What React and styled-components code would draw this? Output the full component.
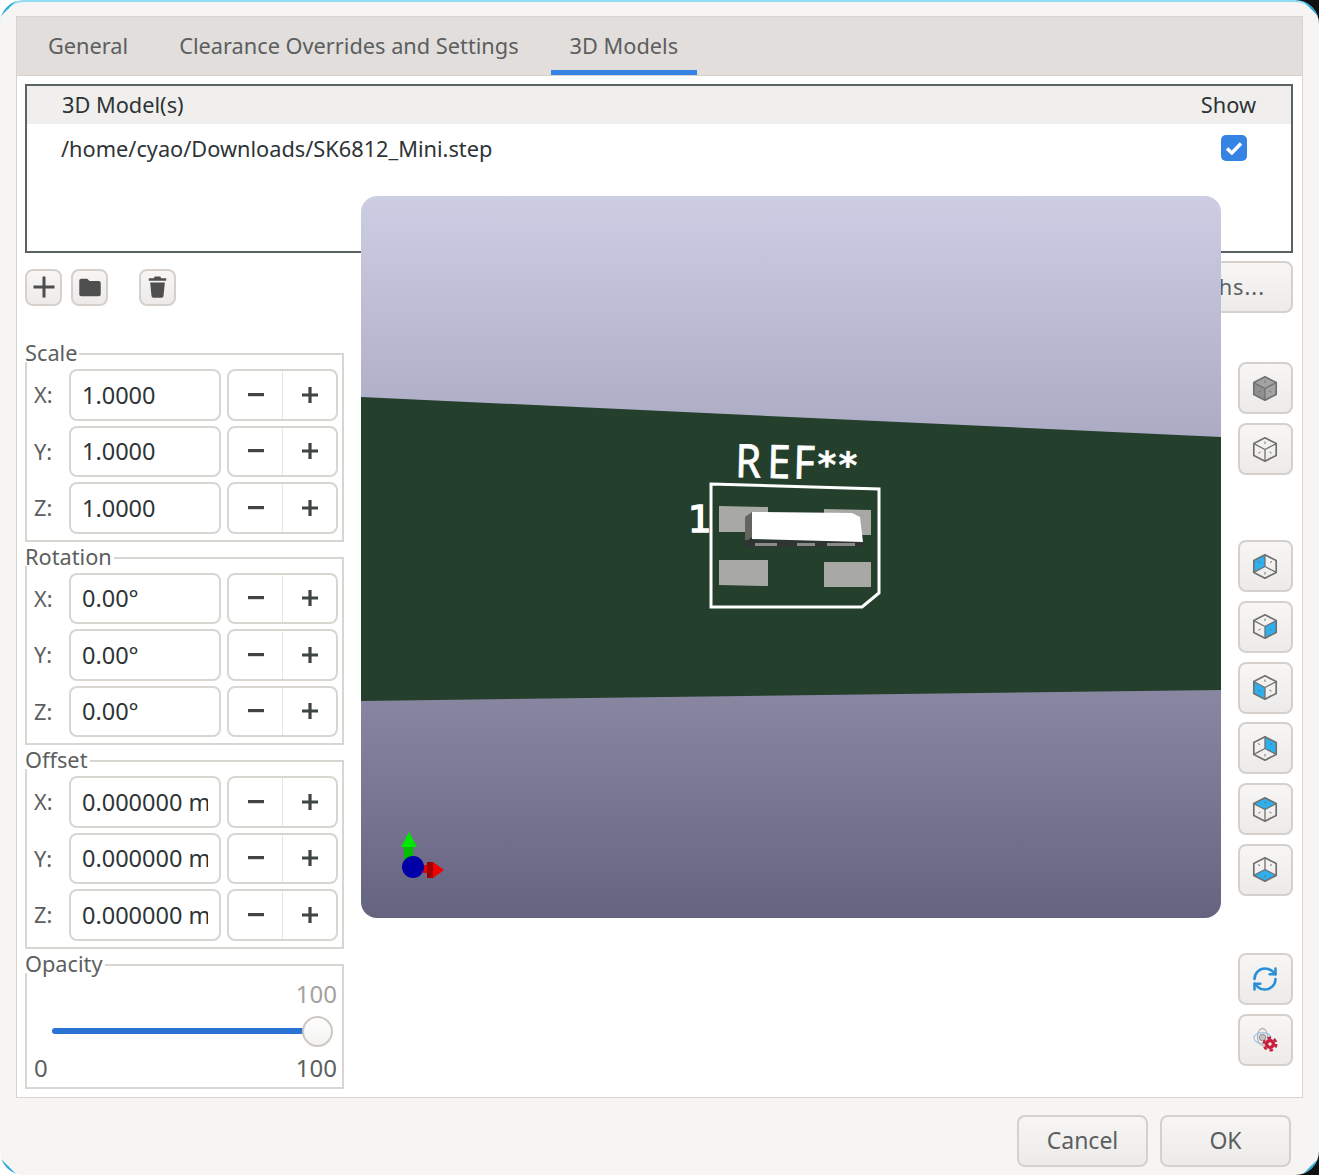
import React from 'react';
import styled, { createGlobalStyle } from 'styled-components';
import { RefreshCw } from 'lucide-react';

const GlobalStyle = createGlobalStyle`
  html, body {
    margin: 0;
    padding: 0;
    background: linear-gradient(90deg, #fff 50%, #111 50%);
  }
  * {
    box-sizing: border-box;
  }
`;

const HEX = { t: '12,0.8', ur: '23.2,6.6', lr: '23.2,18.4', b: '12,24.2', ll: '0.8,18.4', ul: '0.8,6.6', c: '12,12.5' };

const FACES = {
  top: ['t', 'ur', 'c', 'ul'],
  right: ['c', 'ur', 'lr', 'b'],
  left: ['ul', 'c', 'b', 'll'],
  back: ['t', 'c', 'll', 'ul'],
  rear: ['t', 'ur', 'lr', 'c'],
  bottom: ['c', 'lr', 'b', 'll'],
};

const pts = (keys) => keys.map((k) => HEX[k]).join(' ');

const CubeIcon = ({ face, solid, inverted }) => (
  <svg width="26" height="27" viewBox="-1 -1 26 27">
    {solid && <polygon points={pts(['ul', 't', 'ur', 'lr', 'b', 'll'])} fill="#a3a3a3" />}
    {solid && <polygon points={pts(FACES.left)} fill="#8f8f8f" />}
    {face && <polygon points={pts(FACES[face])} fill="#2fb0ee" />}
    <polygon points={pts(['ul', 't', 'ur', 'lr', 'b', 'll'])} fill="none" stroke="#707070" strokeWidth="1.7" strokeLinejoin="round" />
    {inverted ? (
      <path d="M12 12.5V0.8M12 12.5L0.8 18.4M12 12.5L23.2 18.4" stroke="#707070" strokeWidth="1.3" fill="none" />
    ) : (
      <path d="M12 12.5V24.2M12 12.5L0.8 6.6M12 12.5L23.2 6.6" stroke="#707070" strokeWidth="1.3" fill="none" />
    )}
    <path
      d={inverted ? 'M5 7.5L7 8.6M17 8.6L19 7.5M12 18V20.5' : 'M12 4.5V7M5.5 16.2L7.5 15M16.5 15L18.5 16.2'}
      stroke="#707070"
      strokeWidth="1"
      fill="none"
    />
  </svg>
);

const PlusIcon = () => (
  <svg width="24" height="24" viewBox="0 0 24 24">
    <path d="M12 1.5V22.5M1.5 12H22.5" stroke="#4d4d4d" strokeWidth="3" fill="none" />
  </svg>
);

const FolderIcon = () => (
  <svg width="22" height="19" viewBox="0 0 24 20">
    <path d="M2.5 0.5H9L11.5 3H21.5C22.8 3 23.7 4 23.7 5.2V17.3C23.7 18.6 22.8 19.5 21.5 19.5H2.5C1.2 19.5 0.3 18.6 0.3 17.3V2.7C0.3 1.4 1.2 0.5 2.5 0.5Z" fill="#4f4f4f" />
  </svg>
);

const TrashIcon = () => (
  <svg width="19" height="22" viewBox="0 0 20 24">
    <path d="M7 0.5H13L14 2.5H19.5V5.2H0.5V2.5H6Z M2 7H18L16.6 21.5C16.5 22.8 15.6 23.6 14.4 23.6H5.6C4.4 23.6 3.5 22.8 3.4 21.5Z" fill="#4f4f4f" />
  </svg>
);

const SettingsIcon = () => (
  <svg width="30" height="30" viewBox="0 0 30 30">
    <ellipse cx="12.5" cy="13" rx="8.5" ry="5.5" fill="none" stroke="#a9c9e6" strokeWidth="1.3" />
    <ellipse cx="12.5" cy="12" rx="5" ry="8.5" fill="none" stroke="#b5b5b5" strokeWidth="1.3" />
    <circle cx="12.5" cy="12.5" r="3.2" fill="#c4c4c4" stroke="#8d8d8d" strokeWidth="1" />
    <circle cx="20" cy="19" r="3.4" fill="none" stroke="#c8203f" strokeWidth="3.4" />
    <circle cx="20" cy="19" r="6.2" fill="none" stroke="#c8203f" strokeWidth="2.6" strokeDasharray="3.5 2.99" />
  </svg>
);

const Window = styled.div`
  width: 1319px;
  height: 1175px;
  background: #f6f5f4;
  border-top: 2px solid #8fdcf3;
  border-radius: 24px;
  padding: 14px 16px 9px;
  display: flex;
  flex-direction: column;
  font-family: "Noto Sans", sans-serif;
  font-size: 21.75px;
  color: #2e3436;
  position: relative;
`;

const CORNER_CLIP = {
  'top-left': 'polygon(0 0, 17px 0, 0 17px)',
  'top-right': 'polygon(100% 0, 7px 0, 100% 17px)',
  'bottom-left': 'polygon(0 100%, 0 7px, 17px 100%)',
  'bottom-right': 'polygon(100% 100%, 100% 7px, 7px 100%)',
};

const Corner = styled.div`
  position: absolute;
  width: 24px;
  height: 24px;
  ${({ $v }) => ($v === 'top' ? 'top: -2px;' : 'bottom: 0;')}
  ${({ $h }) => ($h === 'left' ? 'left: 0;' : 'right: 0;')}
  border-${({ $v }) => $v}: 3px solid #25a9d8;
  border-${({ $h }) => $h}: 3px solid #25a9d8;
  border-${({ $v }) => $v}-${({ $h }) => $h}-radius: 24px;
  clip-path: ${({ $v, $h }) => CORNER_CLIP[`${$v}-${$h}`]};
`;

const Notebook = styled.div`
  flex: 1;
  min-height: 0;
  border: 1px solid #d8d4d0;
  background: #fff;
  display: flex;
  flex-direction: column;
`;

const TabBar = styled.div`
  height: 59px;
  flex: none;
  background: #e1dedb;
  border-bottom: 1px solid #d5d1cc;
  padding-left: 12px;
  display: flex;
  gap: 13px;
`;

const Tab = styled.div`
  height: 58px;
  padding: 3px 19px 0;
  display: flex;
  align-items: center;
  color: #5c5f60;
  border-bottom: 5px solid ${({ $active }) => ($active ? '#3584e4' : 'transparent')};
  white-space: nowrap;
`;

const Page = styled.div`
  flex: 1;
  min-height: 0;
  padding: 8px 9px 0 8px;
  display: flex;
  flex-direction: column;
`;

const ModelList = styled.div`
  height: 169px;
  flex: none;
  border: 2px solid #5b6362;
`;

const ListHead = styled.div`
  height: 38px;
  background: #f0efed;
  display: flex;
  align-items: center;
  justify-content: space-between;
  padding: 0 35px 2px 35px;
`;

const ListRow = styled.div`
  height: 50px;
  display: flex;
  align-items: center;
  justify-content: space-between;
  padding: 0 44px 2px 34px;
`;

const Checkbox = styled.div`
  width: 26px;
  height: 26px;
  border-radius: 5px;
  background: #3584e4;
  display: flex;
  align-items: center;
  justify-content: center;
`;

const Toolbar = styled.div`
  margin-top: 8px;
  height: 52px;
  flex: none;
  display: flex;
  align-items: center;
`;

const SmallButton = styled.div`
  width: 37px;
  height: 37px;
  border: 2px solid #d5d0cb;
  border-radius: 8px;
  background: linear-gradient(#f7f6f5, #edebe9);
  display: flex;
  align-items: center;
  justify-content: center;
  margin-right: ${({ $gap }) => $gap}px;
`;

const PathsButton = styled.div`
  margin-left: auto;
  width: 300px;
  height: 52px;
  border: 2px solid #d5d0cb;
  border-radius: 8px;
  background: linear-gradient(#f7f6f5, #edebe9);
  display: flex;
  align-items: center;
  justify-content: flex-end;
  padding: 0 26px 2px 0;
  color: #5c5f60;
  letter-spacing: 1px;
`;

const Body = styled.div`
  flex: 1;
  min-height: 0;
  display: flex;
  justify-content: space-between;
`;

const LeftColumn = styled.div`
  width: 319px;
  padding-top: 33px;
  display: flex;
  flex-direction: column;
  gap: 8px;
`;

const Group = styled.fieldset`
  margin: 0;
  padding: 7px 4px 6px 0;
  border: 2px solid #d9d5d1;
  min-width: 0;
`;

const Legend = styled.legend`
  margin-left: -2px;
  padding: 0 2px 0 0;
  line-height: 13px;
  height: 16px;
  color: #5c5f60;
  background: #fff;
`;

const Rows = styled.div`
  display: flex;
  flex-direction: column;
  gap: 5px;
`;

const Row = styled.div`
  display: flex;
  align-items: center;
  height: 51.5px;
  padding-left: 7px;
`;

const AxisLabel = styled.div`
  width: 35px;
  color: #5c5f60;
`;

const Field = styled.div`
  width: 152px;
  height: 100%;
  border: 2px solid #d9d5d1;
  border-radius: 8px;
  padding: 0 0 0 11px;
  display: flex;
  align-items: center;
  white-space: nowrap;
  margin-right: 6px;
  font-size: 23.5px;
`;

const FieldClip = styled.div`
  width: 126px;
  overflow: hidden;
`;

const Spinner = styled.div`
  width: 111px;
  height: 100%;
  border: 2px solid #d9d5d1;
  border-radius: 8px;
  display: flex;
`;

const SpinPart = styled.div`
  flex: 1;
  display: flex;
  align-items: center;
  justify-content: center;
  & + & {
    border-left: 1px solid #e8e6e3;
  }
`;

const SliderBox = styled.div`
  padding: 0 1px 0 7px;
  display: flex;
  flex-direction: column;
  font-size: 24px;
`;

const SliderValue = styled.div`
  flex: none;
  text-align: right;
  color: #a2a2a0;
  height: 28px;
  line-height: 28px;
`;

const Track = styled.div`
  flex: none;
  height: 6px;
  margin: 20px 19px 0 18px;
  border-radius: 3px;
  background: #2a73d4;
  position: relative;
`;

const Thumb = styled.div`
  position: absolute;
  right: -15px;
  top: -12px;
  width: 31px;
  height: 31px;
  border-radius: 50%;
  background: linear-gradient(#fff, #f3f2f0);
  border: 2px solid #cdc7c2;
`;

const Scale = styled.div`
  flex: none;
  margin-top: 21px;
  height: 26px;
  line-height: 26px;
  display: flex;
  justify-content: space-between;
  color: #5c5f60;
`;

const RightColumn = styled.div`
  padding-top: 49px;
  display: flex;
  flex-direction: column;
`;

const IconButton = styled.div`
  width: 55px;
  height: 52px;
  flex: none;
  border: 2px solid #d5d0cb;
  border-radius: 8px;
  background: linear-gradient(#f7f6f5, #edebe9);
  display: flex;
  align-items: center;
  justify-content: center;
  padding-right: 1px;
  margin-top: ${({ $gap }) => $gap}px;
`;

const Footer = styled.div`
  flex: none;
  height: 68px;
  padding: 17px 12px 0 0;
  display: flex;
  justify-content: flex-end;
  gap: 12px;
`;

const DialogButton = styled.div`
  width: 131px;
  height: 52px;
  flex: none;
  border: 2px solid #d5d0cb;
  border-radius: 8px;
  background: linear-gradient(#f7f6f5, #edebe9);
  display: flex;
  align-items: center;
  justify-content: center;
  padding-bottom: 2px;
  color: #5c5f60;
  font-size: 23px;
`;

const Preview = styled.div`
  position: absolute;
  left: 361px;
  top: 194px;
  width: 860px;
  height: 722px;
  border-radius: 16px;
  overflow: hidden;
  background: linear-gradient(#cdcde4 0%, #8885a1 70%, #656480 100%);
`;

const PreviewSvg = styled.svg`
  display: block;
`;

const Silk = styled.text`
  font-family: "Noto Sans", sans-serif;
  fill: #fff;
  stroke: #fff;
  stroke-width: 0.8;
`;

const SilkStars = styled.text`
  font-family: "DejaVu Sans", sans-serif;
  font-weight: bold;
  fill: #fff;
  stroke: #fff;
  stroke-width: 0.4;
`;

const SilkPin = styled.text`
  font-family: "DejaVu Sans", sans-serif;
  fill: #fff;
  stroke: #fff;
  stroke-width: 1.5;
`;

const AxisGroup = ({ label, rows }) => (
  <Group>
    <Legend>{label}</Legend>
    <Rows>
      {rows.map((r) => (
        <Row key={r.axis}>
          <AxisLabel>{r.axis}:</AxisLabel>
          <Field>
            <FieldClip>{r.value}</FieldClip>
          </Field>
          <Spinner>
            <SpinPart>
              <svg width="16" height="4" viewBox="0 0 16 4"><rect width="16" height="3.2" fill="#3f4445" /></svg>
            </SpinPart>
            <SpinPart>
              <svg width="16" height="16" viewBox="0 0 16 16"><path d="M8 0V16M0 8H16" stroke="#3f4445" strokeWidth="3.2" fill="none" /></svg>
            </SpinPart>
          </Spinner>
        </Row>
      ))}
    </Rows>
  </Group>
);

const xyz = (value) => ['X', 'Y', 'Z'].map((axis) => ({ axis, value }));

export default function App() {
  return (
    <Window>
      <GlobalStyle />
      <Corner $v="top" $h="left" />
      <Corner $v="top" $h="right" />
      <Corner $v="bottom" $h="left" />
      <Corner $v="bottom" $h="right" />
      <Notebook>
        <TabBar>
          <Tab>General</Tab>
          <Tab>Clearance Overrides and Settings</Tab>
          <Tab $active>3D Models</Tab>
        </TabBar>
        <Page>
          <ModelList>
            <ListHead>
              <span>3D Model(s)</span>
              <span>Show</span>
            </ListHead>
            <ListRow>
              <span>/home/cyao/Downloads/SK6812_Mini.step</span>
              <Checkbox>
                <svg width="18" height="14" viewBox="0 0 18 14">
                  <path d="M2 7.5L6.8 12L16 2.5" stroke="#fff" strokeWidth="3.4" fill="none" />
                </svg>
              </Checkbox>
            </ListRow>
          </ModelList>
          <Toolbar>
            <SmallButton $gap={9}><PlusIcon /></SmallButton>
            <SmallButton $gap={31}><FolderIcon /></SmallButton>
            <SmallButton><TrashIcon /></SmallButton>
            <PathsButton>Configure Paths...</PathsButton>
          </Toolbar>
          <Body>
            <LeftColumn>
              <AxisGroup label="Scale" rows={xyz('1.0000')} />
              <AxisGroup label="Rotation" rows={xyz('0.00°')} />
              <AxisGroup label="Offset" rows={xyz('0.000000 mm')} />
              <Group>
                <Legend>Opacity</Legend>
                <SliderBox>
                  <SliderValue>100</SliderValue>
                  <Track><Thumb /></Track>
                  <Scale><span>0</span><span>100</span></Scale>
                </SliderBox>
              </Group>
            </LeftColumn>
            <RightColumn>
              <IconButton><CubeIcon solid /></IconButton>
              <IconButton $gap={9}><CubeIcon /></IconButton>
              <IconButton $gap={65}><CubeIcon face="back" inverted /></IconButton>
              <IconButton $gap={8.8}><CubeIcon face="right" /></IconButton>
              <IconButton $gap={8.8}><CubeIcon face="left" /></IconButton>
              <IconButton $gap={8.8}><CubeIcon face="rear" inverted /></IconButton>
              <IconButton $gap={8.8}><CubeIcon face="top" /></IconButton>
              <IconButton $gap={8.8}><CubeIcon face="bottom" inverted /></IconButton>
              <IconButton $gap={57}><RefreshCw size={28} color="#2b8fd8" strokeWidth={2.2} /></IconButton>
              <IconButton $gap={9}><SettingsIcon /></IconButton>
            </RightColumn>
          </Body>
        </Page>
      </Notebook>
      <Footer>
        <DialogButton>Cancel</DialogButton>
        <DialogButton>OK</DialogButton>
      </Footer>
      <Preview>
        <PreviewSvg width="860" height="722" viewBox="0 0 860 722">
          <polygon points="0,201 860,241 860,494 0,505" fill="#243f2c" />
          <Silk fontSize="46" x="0 35.5 64.4" transform="translate(374 281) rotate(1.5) scale(0.9 1)">REF</Silk>
          <SilkStars fontSize="36" x="0 21" transform="translate(456 281) rotate(1.5)">**</SilkStars>
          <SilkPin x="327" y="336" fontSize="37">1</SilkPin>
          <polygon points="358,310 407,311 407,336 358,336" fill="#a8a9a5" />
          <polygon points="463,313 510,314 510,339 463,339" fill="#a8a9a5" />
          <polygon points="358,364 407,364 407,390 358,389" fill="#a8a9a5" />
          <polygon points="463,366 510,366 510,391 463,391" fill="#a8a9a5" />
          <polygon points="384,321 391,316 391,341 384,346" fill="#63645f" />
          <polygon points="384,344 502,345 502,351 384,351" fill="#2f3532" />
          <polygon points="394,347 416,347 416,350 394,350" fill="#8a8a8a" />
          <polygon points="436,347 454,347 454,350 436,350" fill="#8a8a8a" />
          <polygon points="466,347 494,347 494,350 466,350" fill="#8a8a8a" />
          <polygon points="391,316 491,317 499,321 502,346 391,343" fill="#fff" />
          <polygon points="350,288 518,293 518,397 501,411 350,411" fill="none" stroke="#fff" strokeWidth="3" />
          {/* axis gizmo */}
          <polygon points="48,636 40,651 56,651" fill="#00e800" />
          <rect x="43" y="651" width="9" height="15" fill="#00c000" />
          <rect x="62" y="669" width="8" height="8" fill="#e00000" />
          <rect x="66" y="666" width="6" height="16" fill="#a00000" />
          <polygon points="83,674 72,666 72,682" fill="#f00000" />
          <circle cx="52" cy="671" r="11" fill="#0000a8" />
        </PreviewSvg>
      </Preview>
    </Window>
  );
}
